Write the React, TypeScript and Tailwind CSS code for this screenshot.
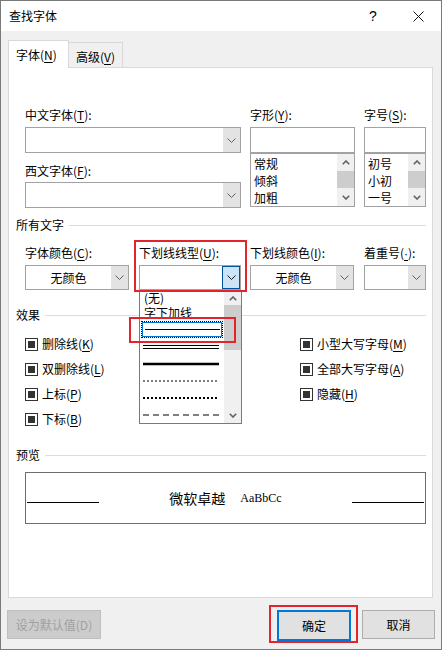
import React from 'react';

const FONT = '"Noto Sans CJK SC", "Noto Sans", sans-serif';

const Chevron = ({ color = '#606060' }: { color?: string }) => (
  <svg width="9" height="5" viewBox="0 0 9 5">
    <polyline points="0.5,0.5 4.5,4.5 8.5,0.5" fill="none" stroke={color} strokeWidth="1" />
  </svg>
);

const ScrollArrow = ({ up }: { up?: boolean }) => (
  <svg width="8" height="5" viewBox="0 0 8 5">
    <polyline
      points={up ? '0.8,4.2 4,1 7.2,4.2' : '0.8,0.8 4,4 7.2,0.8'}
      fill="none"
      stroke="#606060"
      strokeWidth="1.6"
    />
  </svg>
);

const U = ({ children }: { children: React.ReactNode }) => <span className="underline underline-offset-2">{children}</span>;

const Header = ({ title }: { title: string }) => (
  <div className="flex items-center gap-[5px] h-[16px] leading-[16px]">
    <span>{title}</span>
    <div className="flex-1 h-px bg-[#dcdcdc]" />
  </div>
);

const Combo = ({ w, h, text, active }: { w: string; h: string; text?: string; active?: boolean }) => (
  <div className={`${w} ${h} flex border border-[#a2a2a2] bg-white`}>
    <div className="flex-1 flex items-center justify-center">{text}</div>
    {active ? (
      <div className="w-[18px] flex items-center justify-center bg-[#cce4f7] border border-[#005499]">
        <Chevron color="#1a1a1a" />
      </div>
    ) : (
      <div className="w-[17px] flex items-center justify-center bg-[#e3e3e3]">
        <Chevron />
      </div>
    )}
  </div>
);

const ListBox = ({ w, items }: { w: string; items: string[] }) => (
  <div className={`${w} h-[54px] flex border border-[#a2a2a2] bg-white`}>
    <div className="flex-1 pl-[3px] pt-[1px] leading-[17px]">
      {items.map((it) => (
        <div key={it} className="h-[17px]">{it}</div>
      ))}
    </div>
    <div className="w-[17px] flex flex-col bg-[#f0f0f0]">
      <div className="h-[17px] flex items-center justify-center"><ScrollArrow up /></div>
      <div className="h-[17px] bg-[#cdcdcd]" />
      <div className="flex-1 flex items-center justify-center"><ScrollArrow /></div>
    </div>
  </div>
);

const Check = ({ label }: { label: React.ReactNode }) => (
  <div className="flex items-center gap-[4px] h-[16px] leading-[16px]">
    <div className="w-[13px] h-[13px] border border-[#333333] flex items-center justify-center bg-white">
      <div className="w-[7px] h-[7px] bg-[#333333]" />
    </div>
    <span>{label}</span>
  </div>
);

const LineSvg = ({ children }: { children: React.ReactNode }) => (
  <svg width="76" height="6" viewBox="0 0 76 6" className="block">{children}</svg>
);

const UnderlineList = () => (
  <div className="absolute left-0 top-[25px] w-[103px] h-[134px] border border-[#7a7a7a] bg-white z-10 overflow-hidden flex">
    <div className="w-[84px] flex flex-col">
      <div className="mt-[-1px] h-[15px] leading-[15px] pl-[4px]">(无)</div>
      <div className="h-[16px] leading-[16px] pl-[4px]">字下加线</div>
      <div className="h-[17px] ml-[1px] w-[82px] border border-dotted border-black">
        <div className="h-full border border-[#0078d7] flex items-center pl-[2px]">
          <div className="w-[75px] h-[1.5px] bg-black" />
        </div>
      </div>
      <div className="h-[17px] flex items-center pl-[3px]">
        <LineSvg>
          <line x1="0" y1="1.5" x2="76" y2="1.5" stroke="#000" strokeWidth="1" />
          <line x1="0" y1="4.5" x2="76" y2="4.5" stroke="#000" strokeWidth="1" />
        </LineSvg>
      </div>
      <div className="h-[17px] flex items-center pl-[3px]">
        <LineSvg>
          <line x1="0" y1="3" x2="76" y2="3" stroke="#000" strokeWidth="2.5" />
        </LineSvg>
      </div>
      <div className="h-[17px] flex items-center pl-[3px]">
        <LineSvg>
          <line x1="0" y1="3" x2="74" y2="3" stroke="#000" strokeWidth="1" strokeDasharray="2 2" />
        </LineSvg>
      </div>
      <div className="h-[17px] flex items-center pl-[3px]">
        <LineSvg>
          <line x1="0" y1="3" x2="74" y2="3" stroke="#000" strokeWidth="2" strokeDasharray="2 2" />
        </LineSvg>
      </div>
      <div className="h-[17px] flex items-center pl-[3px]">
        <LineSvg>
          <line x1="0" y1="3" x2="76" y2="3" stroke="#000" strokeWidth="1" strokeDasharray="6 4" />
        </LineSvg>
      </div>
    </div>
    <div className="w-[17px] flex flex-col bg-[#f0f0f0]">
      <div className="h-[14px] flex items-center justify-center"><ScrollArrow up /></div>
      <div className="h-[45px] bg-[#cdcdcd]" />
      <div className="flex-1" />
      <div className="h-[16px] flex items-center justify-center"><ScrollArrow /></div>
    </div>
  </div>
);

export default function App() {
  return (
    <div
      className="w-[442px] h-[650px] border border-[#7a7a7a] bg-[#f0f0f0] flex flex-col text-[12px] text-black overflow-hidden"
      style={{ fontFamily: FONT }}
    >
      {/* 标题栏 */}
      <div className="h-[30px] bg-white flex items-center pl-[8px] shrink-0">
        <span className="flex-1 leading-[16px]">查找字体</span>
        <span className="w-[10px] text-[14px] leading-[16px] mr-[34px]" style={{ fontFamily: '"Liberation Sans", sans-serif' }}>?</span>
        <svg width="11" height="11" viewBox="0 0 11 11" className="mr-[17px]">
          <line x1="0.5" y1="0.5" x2="10.5" y2="10.5" stroke="#111" strokeWidth="1" />
          <line x1="10.5" y1="0.5" x2="0.5" y2="10.5" stroke="#111" strokeWidth="1" />
        </svg>
      </div>

      {/* 选项卡 */}
      <div className="pl-[7px] pr-[8px] pt-[9px]">
        <div className="flex items-end h-[27px]">
          <div className="relative z-10 w-[61px] h-[28px] -mb-px bg-white border border-b-0 border-[#d9d9d9] pl-[7px] pt-[6px] leading-[16px]">
            字体(<U>N</U>)
          </div>
          <div className="w-[54px] h-[25px] border-t border-r border-[#d9d9d9] pl-[7px] pt-[6px] leading-[16px]">
            高级(<U>V</U>)
          </div>
        </div>

        {/* 面板 */}
        <div className="h-[531px] bg-white border border-[#d9d9d9] pl-[7px] pr-[6px] pt-[39px] flex flex-col">
          <div className="ml-[9px] grid grid-cols-[216px_105px_62px] gap-x-[9px]">
            <div className="flex flex-col">
              <div className="h-[16px] leading-[16px]">中文字体(<U>T</U>):</div>
              <div className="mt-[4px]"><Combo w="w-[216px]" h="h-[26px]" /></div>
              <div className="mt-[10px] h-[16px] leading-[16px]">西文字体(<U>F</U>):</div>
              <div className="mt-[3px]"><Combo w="w-[216px]" h="h-[26px]" /></div>
            </div>
            <div className="flex flex-col">
              <div className="h-[16px] leading-[16px]">字形(<U>Y</U>):</div>
              <div className="mt-[4px] h-[26px] border border-[#a2a2a2] bg-white" />
              <ListBox w="w-[105px]" items={['常规', '倾斜', '加粗']} />
            </div>
            <div className="flex flex-col">
              <div className="h-[16px] leading-[16px]">字号(<U>S</U>):</div>
              <div className="mt-[4px] h-[26px] border border-[#a2a2a2] bg-white" />
              <ListBox w="w-[62px]" items={['初号', '小初', '一号']} />
            </div>
          </div>

          <div className="mt-[9px]"><Header title="所有文字" /></div>

          <div className="ml-[9px] mt-[12px] flex">
            <div className="w-[114px] flex flex-col">
              <div className="h-[16px] leading-[16px]">字体颜色(<U>C</U>):</div>
              <div className="mt-[4px]"><Combo w="w-[104px]" h="h-[25px]" text="无颜色" /></div>
            </div>
            <div className="w-[111px] flex flex-col relative">
              <div className="h-[16px] leading-[16px]">下划线线型(<U>U</U>):</div>
              <div className="mt-[4px] relative">
                <Combo w="w-[102px]" h="h-[25px]" active />
                <UnderlineList />
                <div className="absolute left-[-10px] top-[52px] w-[107px] h-[26px] border-2 border-[#e3242b] z-20" />
              </div>
              <div className="absolute left-[-5px] top-[-5px] w-[113px] h-[52px] border-2 border-[#e3242b] z-20" />
            </div>
            <div className="w-[114px] flex flex-col">
              <div className="h-[16px] leading-[16px]">下划线颜色(<U>I</U>):</div>
              <div className="mt-[4px]"><Combo w="w-[104px]" h="h-[25px]" text="无颜色" /></div>
            </div>
            <div className="w-[62px] flex flex-col">
              <div className="h-[16px] leading-[16px]">
                着重号(<span className="underline underline-offset-2" style={{ fontFamily: '"Liberation Sans", sans-serif' }}>{'\u00B7'}</span>):
              </div>
              <div className="mt-[4px]"><Combo w="w-[62px]" h="h-[25px]" /></div>
            </div>
          </div>

          <div className="mt-[17px]"><Header title="效果" /></div>

          <div className="ml-[9px] mt-[13px] flex">
            <div className="w-[275px] flex flex-col gap-[9px]">
              <Check label={<>删除线(<U>K</U>)</>} />
              <Check label={<>双删除线(<U>L</U>)</>} />
              <Check label={<>上标(<U>P</U>)</>} />
              <Check label={<>下标(<U>B</U>)</>} />
            </div>
            <div className="flex flex-col gap-[9px]">
              <Check label={<>小型大写字母(<U>M</U>)</>} />
              <Check label={<>全部大写字母(<U>A</U>)</>} />
              <Check label={<>隐藏(<U>H</U>)</>} />
            </div>
          </div>

          <div className="mt-[20px]"><Header title="预览" /></div>

          {/* 预览框 */}
          <div className="ml-[9px] mt-[9px] h-[52px] border border-[#6d6d6d] flex">
            <div className="self-start mt-[29px] ml-[1px] w-[72px] h-px bg-black" />
            <div className="flex-1 flex items-center justify-center gap-[15px]">
              <span className="text-[14px] leading-[18px]">微软卓越</span>
              <span className="text-[12px] leading-[16px]" style={{ fontFamily: '"Liberation Serif", serif' }}>AaBbCc</span>
            </div>
            <div className="self-start mt-[29px] mr-[1px] w-[72px] h-px bg-black" />
          </div>
        </div>
      </div>

      {/* 按钮 */}
      <div className="pl-[6px] pr-[6px] mt-[12px] flex items-start">
        <div className="w-[94px] h-[29px] bg-[#cccccc] border border-[#bfbfbf] text-[#a0a0a0] flex items-center justify-center">
          设为默认值(D)
        </div>
        <div className="flex-1" />
        <div className="relative">
          <div className="w-[74px] h-[31px] bg-[#e1e1e1] border-2 border-[#0078d7] flex items-center justify-center">
            确定
          </div>
          <div className="absolute left-[-8px] top-[-5px] w-[89px] h-[38px] border-2 border-[#e3242b]" />
        </div>
        <div className="ml-[11px] w-[73px] h-[29px] bg-[#e1e1e1] border border-[#adadad] flex items-center justify-center">
          取消
        </div>
      </div>
    </div>
  );
}
